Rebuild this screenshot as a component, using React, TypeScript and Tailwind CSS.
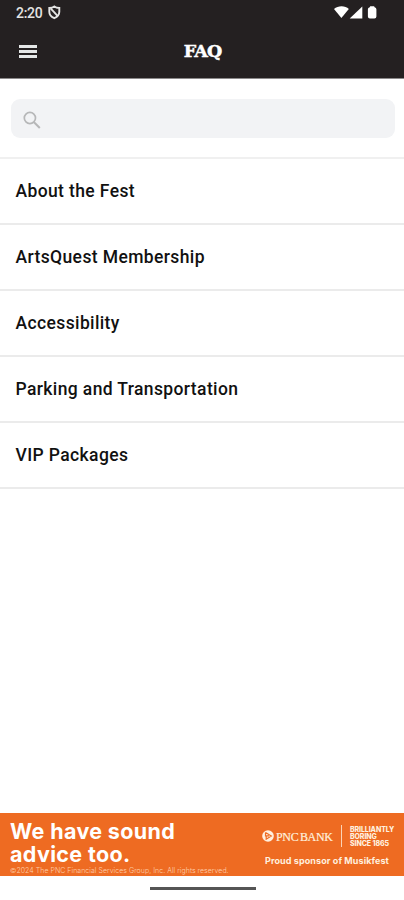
import React from "react";

const topics = [
  "About the Fest",
  "ArtsQuest Membership",
  "Accessibility",
  "Parking and Transportation",
  "VIP Packages",
];

function StatusBar() {
  return (
    <div className="flex h-[25px] items-center pl-4 pr-[25px] text-white">
      <span className="font-[Roboto,sans-serif] text-[14px] font-medium leading-none tracking-[-0.3px] text-[#e4e4e4]">2:20</span>
      <svg className="ml-[6px]" width="13" height="15" viewBox="0 0 13 15" fill="none" stroke="#e4e4e4" strokeWidth="1.9">
        <path d="M6.300 1.500C8 2.700 9.500 2.900 11.300 3v3.800c0 3-2 5.200-5 6.400-3-1.200-5-3.400-5-6.400V3C3.100 2.900 4.600 2.700 6.300 1.500Z" />
        <path d="m2.600 3.300 7.400 8" />
      </svg>
      <svg className="ml-auto" width="45" height="15" viewBox="0 0 45 15" fill="#fff">
        <path d="M0 4C4 .4 11.300.4 14.800 4L7.400 13.100Z" />
        <path d="M28.300 1.400v12H15.700Z" />
        <path d="M36.200 1.200h3.900l.5 1q1.800.3 1.800 2v7.300q0 2-2 2h-4.500q-2 0-2-2V4.200q0-1.700 1.800-2Z" />
      </svg>
    </div>
  );
}

function Header() {
  return (
    <header className="h-[79px] shrink-0 border-b border-[#8b898a] bg-[#242021]">
      <StatusBar />
      <div className="grid h-[53px] grid-cols-[1fr_auto_1fr] items-center pl-[19px] pr-[18px]">
        <button aria-label="Menu" className="flex w-[18px] flex-col gap-[2px]">
          <span className="h-[3px] w-full bg-[#e5e7e7]" />
          <span className="h-[3px] w-full bg-[#e5e7e7]" />
          <span className="h-[3px] w-full bg-[#e5e7e7]" />
        </button>
        <h1 className="pt-px font-['DejaVu_Serif',serif] text-[17.500px] font-bold leading-none tracking-[-0.9px] text-white [-webkit-text-stroke:0.500px_white]">FAQ</h1>
      </div>
    </header>
  );
}

function PncLogo() {
  return (
    <div className="flex h-[22px] items-center text-[#fff0df]">
      <svg width="12" height="12" viewBox="0 0 12 12">
        <circle cx="6" cy="6" r="5.800" fill="#fff0df" />
        <path d="M3.500 2.400 9.300 6 4.200 9.200V5.800L7 5.900M3.500 2.400v4" fill="none" stroke="#ee6b22" strokeWidth="1.200" />
      </svg>
      <span className="ml-[2px] w-[59px] whitespace-nowrap pt-px font-['Liberation_Serif',serif] text-[12px] leading-none tracking-[-0.350px] [word-spacing:-1px] [-webkit-text-stroke:0.200px_#fff0df]">PNC BANK</span>
      <span className="ml-[6px] h-[22px] w-px bg-[#fbd3b6]" />
      <div className="ml-[8px] whitespace-nowrap font-[Inter,sans-serif] text-[7px] font-extrabold leading-[7px] tracking-[-0.1px]">
        BRILLIANTLY
        <br />
        BORING
        <br />
        SINCE 1865
      </div>
    </div>
  );
}

function SponsorBanner() {
  return (
    <aside className="flex h-[63px] justify-between overflow-hidden bg-[#ee6b22] pl-[10px]">
      <div className="whitespace-nowrap pt-[7px] text-white">
        <div className="font-[Inter,sans-serif] text-[21.500px] font-bold leading-[23px] tracking-[0.350px]">
          We have sound
          <br />
          advice too.
        </div>
        <div className="font-[Inter,sans-serif] text-[7px] font-light leading-[10px] tracking-[0.030px] text-[#ffd0ad]">©2024 The PNC Financial Services Group, Inc. All rights reserved.</div>
      </div>
      <div className="w-[142px] pt-[12px]">
        <PncLogo />
        <div className="ml-[3px] mt-[8px] whitespace-nowrap font-[Inter,sans-serif] text-[9px] font-bold leading-[11px] tracking-[0.100px] text-[#fff0df]">Proud sponsor of Musikfest</div>
      </div>
    </aside>
  );
}

export default function App() {
  return (
    <div className="flex h-[900px] w-[404px] flex-col overflow-hidden bg-white">
      <Header />
      <div className="h-[78px] shrink-0 pl-[10.500px] pr-[9px] pt-5">
        <div className="flex h-[39px] items-center rounded-[9px] bg-[#f2f3f5] pl-[11px]">
          <svg className="mt-[4px]" width="20" height="20" viewBox="0 0 20 20" fill="none" stroke="#b6b7b8" strokeWidth="1.700">
            <circle cx="7.900" cy="7" r="5.600" />
            <path d="m12 11.200 5.800 5.800" strokeWidth="2" />
          </svg>
        </div>
      </div>
      <ul className="border-t-2 border-[#f0f0f0]">
        {topics.map((topic) => (
          <li key={topic} className="flex h-[66px] items-center border-b-2 border-[#ebebeb] pl-[15.500px] pt-px">
            <span className="font-[Roboto,sans-serif] text-[17.500px] font-medium tracking-[0.380px] text-[#111]">{topic}</span>
          </li>
        ))}
      </ul>
      <div className="mt-auto">
        <SponsorBanner />
        <div className="flex h-6 justify-center pl-px pt-[11px]">
          <div className="h-[3px] w-[106px] bg-[#555]" />
        </div>
      </div>
    </div>
  );
}
